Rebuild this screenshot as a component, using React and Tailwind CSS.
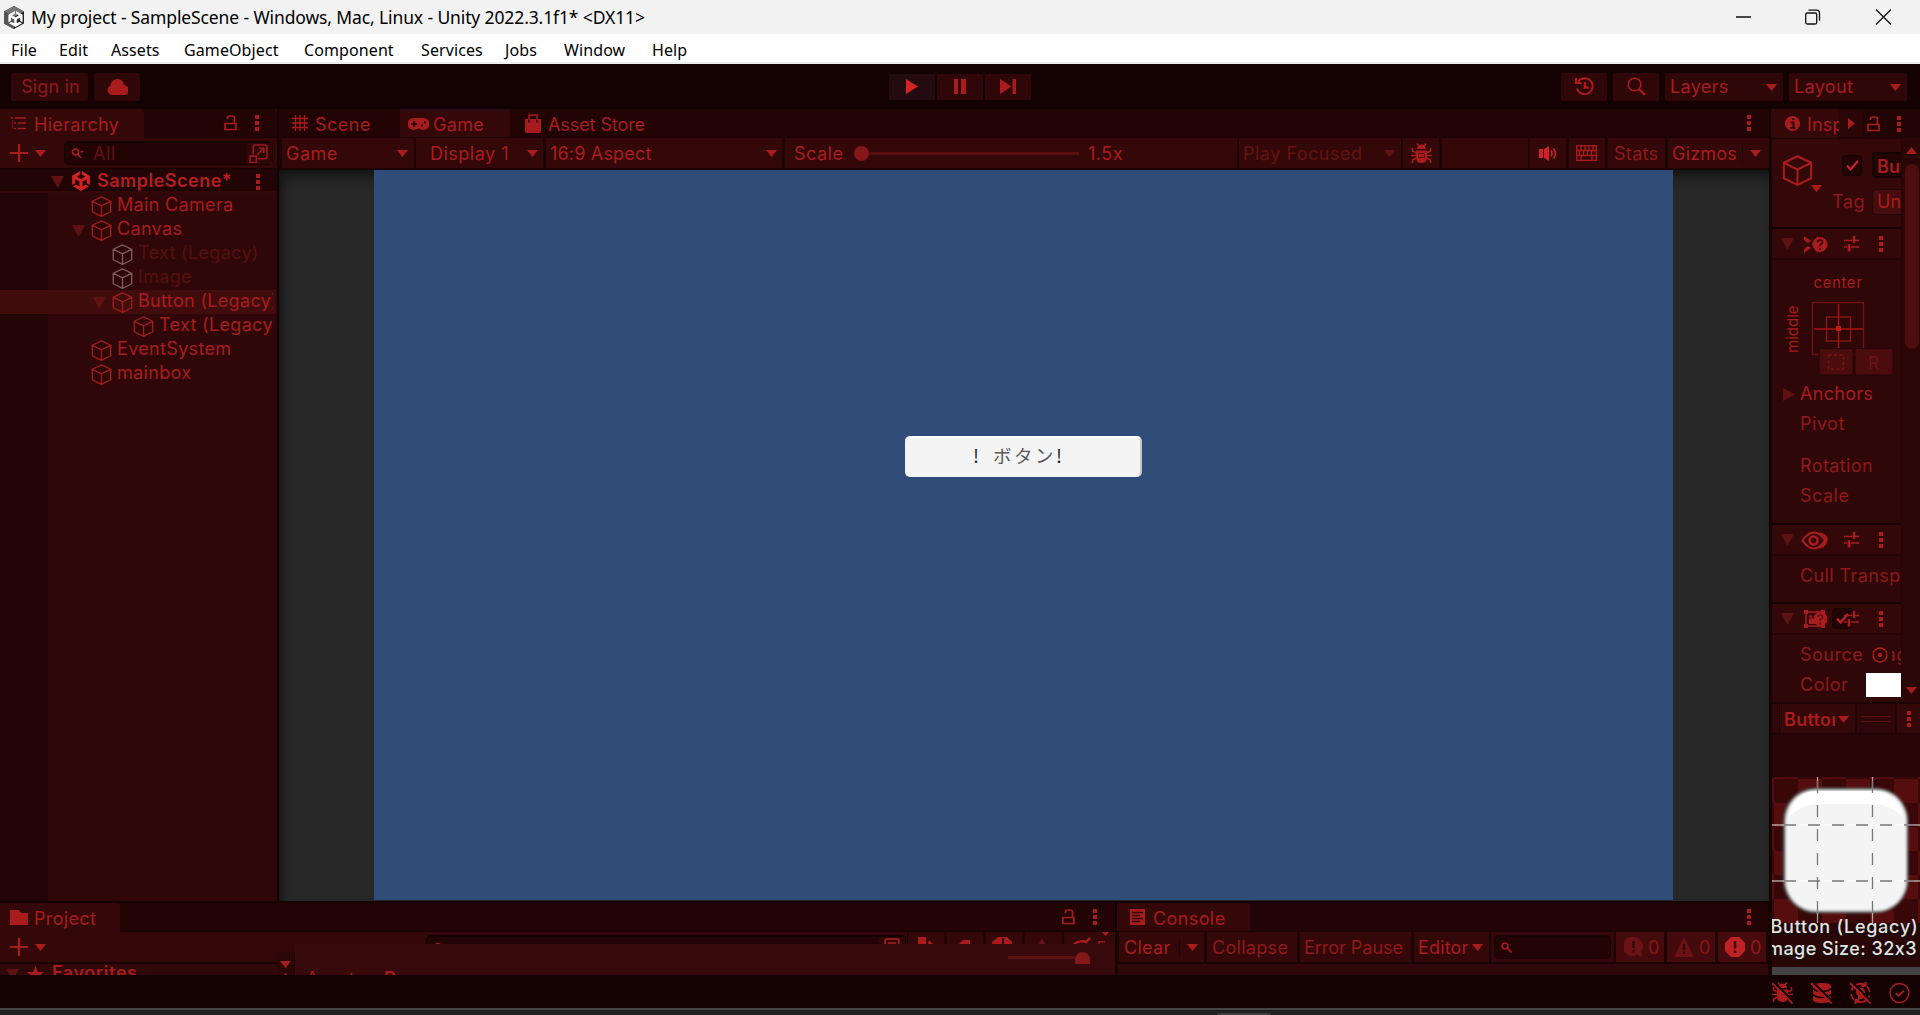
import React from 'react';
import { SiUnity } from 'react-icons/si';

const menus = [
  { label: 'File', width: 'w-[48px]' },
  { label: 'Edit', width: 'w-[52px]' },
  { label: 'Assets', width: 'w-[73px]' },
  { label: 'GameObject', width: 'w-[120px]' },
  { label: 'Component', width: 'w-[117px]' },
  { label: 'Services', width: 'w-[84px]' },
  { label: 'Jobs', width: 'w-[59px]' },
  { label: 'Window', width: 'w-[88px]' },
  { label: 'Help', width: 'w-[60px]' },
];

const tree = [
  { name: 'Main Camera', indent: 'w-[91px]' },
  { name: 'Canvas', indent: 'w-[91px]', open: true },
  { name: 'Text (Legacy)', indent: 'w-[112px]', off: true },
  { name: 'Image', indent: 'w-[112px]', off: true },
  { name: 'Button (Legacy)', indent: 'w-[112px]', open: true, selected: true },
  { name: 'Text (Legacy', indent: 'w-[133px]' },
  { name: 'EventSystem', indent: 'w-[91px]' },
  { name: 'mainbox', indent: 'w-[91px]' },
];

/* ---------- Icons ---------- */

const Down = ({ className = '' }) => (
  <svg className={`shrink-0 ${className}`} width="11" height="7" viewBox="0 0 11 7" fill="currentColor">
    <path d="M0 0h11L5.500 7z" />
  </svg>
);

const Fold = ({ className = '' }) => (
  <svg className={`shrink-0 text-[#5d1112] ${className}`} width="13" height="12" viewBox="0 0 13 12" fill="currentColor">
    <path d="M0 0h13L6.500 12z" />
  </svg>
);

const Dots = ({ className = '' }) => (
  <svg className={`shrink-0 ${className}`} width="4" height="16" viewBox="0 0 4 16" fill="currentColor">
    <path d="M0 0h4v4H0zM0 6h4v4H0zM0 12h4v4H0z" />
  </svg>
);

const Lock = ({ className = '' }) => (
  <svg className={`shrink-0 ${className}`} width="13" height="16" viewBox="0 0 13 16" fill="none" stroke="currentColor" strokeWidth="1.700">
    <path d="M1 8.500h11v6H1zM10.500 8V3Q10.500 1 8.500 1H5.500Q3.500 1 3.500 3v1" />
  </svg>
);

const Cube = ({ size = 21, className = '' }) => (
  <svg className={`shrink-0 ${className}`} width={size} height={size} viewBox="0 0 20 20" fill="none" stroke="currentColor" strokeWidth="1.300" strokeLinejoin="round">
    <path d="M10 .8l8.800 4.200v10L10 19.300 1.200 15V5zM1.200 5L10 9.500 18.800 5M10 9.500v9.800" />
  </svg>
);

const Plus = () => (
  <svg className="shrink-0" width="18" height="18" viewBox="0 0 18 18" stroke="currentColor" strokeWidth="2.200">
    <path d="M9 0v18M0 9h18" />
  </svg>
);

const Sliders = () => (
  <svg className="shrink-0" width="15" height="16" viewBox="0 0 15 16" fill="none" stroke="currentColor" strokeWidth="1.500">
    <path d="M0 4.500h8M10 4.500h5M0 11h3M7 11h8" />
    <path d="M10 0v7M5 8v7.500" strokeWidth="2.500" />
  </svg>
);

const BugShape = () => (
  <>
    <path d="M6 6a4.500 4.500 0 019 0zM5 7.500h11v7q0 5.500-5.500 5.500T5 14.500z" fill="currentColor" />
    <path d="M6 .5L8 3M15 .5L13 3M1.500 5v3l4 2M19.500 5v3l-4 2M0 12.500h21M1.500 20v-3l4-2M19.500 20v-3l-4-2" fill="none" stroke="currentColor" strokeWidth="1.600" />
  </>
);

const Slash = () => (
  <>
    <path d="M2 0l20 20" stroke="#140202" strokeWidth="2" />
    <path d="M0 1l20.500 20.500" stroke="currentColor" strokeWidth="1.800" />
  </>
);

/* ---------- Window chrome ---------- */

const TitleBar = () => (
  <div className="flex h-[34px] shrink-0 items-center bg-[#f2f2f2] pl-[4px] text-black">
    <svg width="20" height="23" viewBox="0 0 20 23">
      <path d="M10 0l10 5.500v12L10 23 0 17.500v-12z" fill="#252525" />
      <path d="M10 0l10 5.500L10 11 0 5.500z" fill="#777" />
      <path d="M0 5.500L10 11v12L0 17.500z" fill="#555" />
      <SiUnity x="3.500" y="5" width="13" height="13" color="#fff" />
    </svg>
    <p className="ml-[7px] text-[17.500px] tracking-[-0.120px]">
      My project - SampleScene - Windows, Mac, Linux - Unity 2022.3.1f1* &lt;DX11&gt;
    </p>
    <div className="mr-[29px] ml-auto flex items-center">
      <svg width="155" height="16" viewBox="0 0 155 16" fill="none" stroke="#111" strokeWidth="1.300">
        <path d="M0 8h15M140 .5l15 15M155 .5l-15 15" />
        <rect x="69.700" y="4" width="11" height="11" rx="1.500" />
        <path d="M72.500 1.200h8q3 0 3 3v7.500" />
      </svg>
    </div>
  </div>
);

const MenuBar = () => (
  <div className="flex h-[30px] shrink-0 items-center border-b-2 border-[#eeeeee] bg-white pt-[3px] pl-[11px] text-[16px] tracking-[0.100px] text-black">
    {menus.map((m) => (
      <span key={m.label} className={`shrink-0 ${m.width}`}>{m.label}</span>
    ))}
  </div>
);

const MainToolbar = () => (
  <div className="flex h-[45px] shrink-0 items-center pl-[11px]">
    <div className="flex h-[28px] w-[77px] items-center justify-center rounded-[2px] bg-[#300708] pt-px pl-[2px] tracking-[0.150px] text-[#90191a]">Sign in</div>
    <div className="ml-[6px] flex h-[28px] w-[46px] items-center justify-center rounded-[2px] bg-[#300708]">
      <svg width="21" height="16" viewBox="0 0 21 16" fill="currentColor">
        <path d="M5 16a5 5 0 01-1.500-9.500C4 2.500 7 0 10.500 0s6 2.500 6.500 6a5 5 0 01-.5 10z" />
      </svg>
    </div>
    <div className="ml-[749px] flex gap-[2px]">
      <div className="flex h-[26px] w-[46px] items-center justify-center bg-[#230b10] text-[#d22426]">
        <svg width="12" height="15" viewBox="0 0 12 15" fill="currentColor"><path d="M0 0l12 7.500L0 15z" /></svg>
      </div>
      <div className="flex h-[26px] w-[46px] items-center justify-center bg-[#300708]">
        <svg width="12" height="15" viewBox="0 0 12 15" fill="currentColor"><path d="M0 0h4v15H0zM7 0h5v15H7z" /></svg>
      </div>
      <div className="flex h-[26px] w-[46px] items-center justify-center bg-[#300708]">
        <svg width="16" height="15" viewBox="0 0 16 15" fill="currentColor"><path d="M0 0l11.500 7.500L0 15zM12.500 0H16v15h-3.500z" /></svg>
      </div>
    </div>
    <div className="mr-[13px] ml-auto flex gap-[6px]">
      <div className="flex h-[28px] w-[46px] items-center justify-center rounded-[2px] bg-[#300708]">
        <svg width="19" height="19" viewBox="0 0 19 19" fill="none" stroke="currentColor" strokeWidth="2">
          <path d="M2.800 5A8 8 0 112 11.500M1 1v5h5.500" />
          <path d="M10 5v5.500h3.500" strokeWidth="2.400" />
        </svg>
      </div>
      <div className="flex h-[28px] w-[46px] items-center justify-center rounded-[2px] bg-[#300708]">
        <svg width="19" height="19" viewBox="0 0 19 19" fill="none" stroke="currentColor" strokeWidth="1.600">
          <circle cx="7.500" cy="7.500" r="6.300" />
          <path d="M12 12l6 6" strokeWidth="2.400" />
        </svg>
      </div>
      <div className="flex h-[28px] w-[118px] items-center rounded-[2px] bg-[#300708] pt-px pr-[6px] pl-[5px] tracking-[0.350px]">
        Layers<Down className="ml-auto" />
      </div>
      <div className="flex h-[28px] w-[118px] items-center rounded-[2px] bg-[#300708] pt-px pr-[6px] pl-[5px] tracking-[0.350px]">
        Layout<Down className="ml-auto" />
      </div>
    </div>
  </div>
);

/* ---------- Hierarchy ---------- */

const Hierarchy = () => (
  <div className="flex h-[792px] w-[277px] shrink-0 flex-col overflow-hidden bg-[#2f0708]">
    <div className="flex h-[29px] shrink-0 items-center rounded-tr-[5px] border-b border-[#1a0303] bg-[#230405]">
      <div className="flex h-[29px] w-[144px] items-center rounded-tr-[4px] bg-[#340809] pl-[11px]">
        <svg width="15" height="13" viewBox="0 0 15 13" stroke="currentColor" strokeWidth="1.400">
          <path d="M0 1h2M4 1h11M3 6h2M7 6h8M3 11.500h2M7 11.500h8" />
          <path d="M1.500 3v9" strokeOpacity="0.500" />
        </svg>
        <span className="mt-[3px] ml-[8px] tracking-[0.300px]">Hierarchy</span>
      </div>
      <Lock className="ml-[80px]" />
      <Dots className="ml-[18px]" />
    </div>
    <div className="flex h-[30px] shrink-0 items-center bg-[#340809] pl-[10px]">
      <Plus />
      <Down className="ml-[7px]" />
      <div className="ml-[18px] flex h-[24px] w-[209px] items-center rounded-[5px] border border-t-2 border-[#180303] bg-[#230405] pl-[6px]">
        <svg width="13" height="11" viewBox="0 0 13 11" fill="none" stroke="currentColor" strokeWidth="1.700">
          <circle cx="4.500" cy="4" r="3" />
          <path d="M6.500 6l3.500 4" />
          <path d="M9 3h4l-2 2z" fill="currentColor" stroke="none" />
        </svg>
        <span className="ml-[9px] text-[#621213]">All</span>
        <div className="ml-auto flex h-full w-[27px] items-center justify-center border-l border-[#180303] bg-[#300708] pr-[2px]">
          <svg width="19" height="19" viewBox="0 0 18 18" fill="none" stroke="#981a1b" strokeWidth="1.500">
            <path d="M4 10V3q0-2 2-2h9q2 0 2 2v9q0 2-2 2H8" />
            <path d="M1 11.500h6v6H1zM8 10l6-6M9.500 4H14v4.500" />
          </svg>
        </div>
      </div>
    </div>
    <div className="flex h-[25px] shrink-0 items-center border-t border-b-2 border-t-[#1a0303] border-b-[#340809] bg-[#210405] pl-[51px]">
      <Fold className="mt-[3px]" />
      <SiUnity size={20} className="mt-[2px] ml-[7px] shrink-0 text-[#d02325]" />
      <span className="mt-[2px] ml-[6px] w-[152px] font-semibold text-[#b61e20]">SampleScene*</span>
      <Dots className="mt-[3px] ml-[7px]" />
    </div>
    <div className="flex flex-1 flex-col bg-linear-to-r from-[#230506] from-[48px] to-[#2f0708] to-[48px] pt-px">
      {tree.map((node, i) => (
        <div key={i} className={`flex h-[24px] w-[276px] items-center overflow-hidden pr-[3px] pb-[3px] whitespace-nowrap ${node.selected ? 'bg-[#410c0d]' : ''}`}>
          <div className={`flex shrink-0 justify-end pr-[6px] ${node.indent}`}>{node.open && <Fold className="mt-[4px]" />}</div>
          <Cube className={node.off ? 'mt-[3px] text-[#7d5c5d]' : 'mt-[3px] text-[#a01b1c]'} />
          <span className={`ml-[5px] overflow-hidden tracking-[0.330px] ${node.off ? 'text-[#561011]' : ''}`}>{node.name}</span>
        </div>
      ))}
    </div>
  </div>
);

/* ---------- Game view ---------- */

const GamePanel = () => (
  <div className="ml-[2px] flex h-[792px] w-[1490px] shrink-0 flex-col bg-[#1c0304]">
    <div className="flex h-[28px] shrink-0 items-center rounded-t-[4px] bg-[#230405] pl-[13px]">
      <svg width="16" height="16" viewBox="0 0 16 16" stroke="currentColor">
        <path d="M3.500 0v16M8 0v16M12.500 0v16M0 3.500h16M0 8h16M0 12.500h16" strokeWidth="1.300" />
      </svg>
      <span className="mt-[3px] ml-[7px] w-[85px]">Scene</span>
      <div className="flex h-[28px] w-[110px] items-center border-t-2 border-[#280b12] bg-[#340809] pl-[8px]">
        <svg width="21" height="12" viewBox="0 0 21 12" fill="currentColor">
          <path fillRule="evenodd" d="M5.500 0h10a5.500 5.500 0 010 12C13 12 13 10.500 10.500 10.500S8 12 5.500 12a5.500 5.500 0 010-12zM5 3v2H3v2h2v2h2V7h2V5H7V3zM13 6.500v2h2v-2zM16 3.500v2h2v-2z" />
        </svg>
        <span className="mt-[2px] ml-[4px] tracking-[0.300px]">Game</span>
      </div>
      <svg className="ml-[15px]" width="16" height="19" viewBox="0 0 16 19">
        <path d="M0 5h16v12q0 2-2 2H2q-2 0-2-2z" fill="currentColor" />
        <path d="M4 8V1h8v7" fill="none" stroke="currentColor" strokeWidth="1.500" />
        <path d="M4 5.500v3M12 5.500v3" stroke="#230405" strokeWidth="1.300" />
      </svg>
      <span className="mt-[3px] ml-[7px] tracking-[-0.080px]">Asset Store</span>
      <Dots className="mr-[18px] ml-auto" />
    </div>
    <div className="mt-px flex h-[30px] w-[1490px] shrink-0 pl-[3px]">
      <div className="flex w-[132px] items-center bg-[#340809] pt-px pr-[6px] pl-[4px]">Game<Down className="ml-auto" /></div>
      <div className="ml-[2px] flex w-[127px] items-center bg-[#340809] pt-px pr-[5px] pl-[14px]">Display 1<Down className="ml-auto" /></div>
      <div className="ml-[3px] flex w-[236px] items-center bg-[#340809] pt-px pr-[5px] pl-[4px] tracking-[0.180px]">16:9 Aspect<Down className="ml-auto" /></div>
      <div className="ml-[3px] flex w-[452px] items-center bg-[#340809] pt-px pl-[9px]">
        <span className="w-[60px] shrink-0">Scale</span>
        <div className="h-[15px] w-[15px] shrink-0 rounded-full bg-[#851718]" />
        <div className="h-[3px] w-[210px] shrink-0 bg-[#570f10]" />
        <span className="ml-[9px]">1.5x</span>
      </div>
      <div className="ml-[2px] flex w-[162px] items-center bg-[#340809] pt-px pr-[6px] pl-[4px] text-[#651213]">Play Focused<Down className="ml-auto" /></div>
      <div className="ml-[2px] flex w-[36px] items-center justify-center bg-[#340809]">
        <svg width="21" height="21" viewBox="0 0 21 21">
          <BugShape />
          <path d="M7.500 10.500h6v4h-6z" fill="none" stroke="#5d1011" />
        </svg>
      </div>
      <div className="ml-[3px] w-[86px] bg-[#340809]" />
      <div className="ml-[2px] flex w-[36px] items-center justify-center bg-[#340809] text-[#d02325]">
        <svg width="19" height="15" viewBox="0 0 19 15" fill="currentColor">
          <path d="M0 3h4v9H0zM5 3l5-3v15l-5-3z" />
          <path d="M12 4.500q2 3 0 6M14.500 2.500q4 5 0 10" fill="none" stroke="currentColor" strokeWidth="1.500" />
        </svg>
      </div>
      <div className="ml-[3px] flex w-[36px] items-center justify-center bg-[#340809] pr-px">
        <svg width="21" height="16" viewBox="0 0 21 16" fill="none" stroke="currentColor" strokeWidth="1.300">
          <path d="M.7.7h19.600v14.600H.7zM1 5.500h19M1 10.500h19M5 1v4M9 1v4M13 1v4M17 1v4M3.500 6v4M7.500 6v4M11.500 6v4M15.500 6v4M5 11v4M16 11v4" />
        </svg>
      </div>
      <div className="ml-[3px] flex w-[57px] items-center bg-[#340809] pt-px pl-[6px] tracking-[0.300px] text-[#90191a]">Stats</div>
      <div className="ml-[3px] flex w-[101px] items-center bg-[#340809] pt-px pl-[4px]">
        <span className="w-[70px] tracking-[0.200px]">Gizmos</span>
        <div className="h-[18px] w-px bg-[#210405]" />
        <Down className="ml-[7px]" />
      </div>
    </div>
    <div className="mt-[2px] flex h-[731px] bg-[#282828] pl-[95px] shadow-[inset_0_14px_14px_-8px_#121212,inset_8px_0_8px_-5px_#161616]">
      <div className="flex h-[730px] w-[1299px] justify-center bg-[#304d79] pt-[266px]">
        <div className="flex h-[41px] w-[237px] items-center rounded-[5px] border-t-2 border-r-2 border-t-white border-r-[#c4c4c4] bg-[#f4f4f4] pb-[5px] pl-[68px] font-['Noto_Sans_CJK_JP',sans-serif] text-[18.500px] tracking-normal whitespace-pre text-[#5a5a5a]">
          <span className="w-[15px] text-[#222]">!</span>
          <span className="w-[68px] text-right tracking-[2.500px]">ボタン</span>
          <span className="text-[#222]">!</span>
        </div>
      </div>
    </div>
  </div>
);

/* ---------- Inspector ---------- */

const ComponentHeader = ({ children }) => (
  <div className="flex h-[33px] shrink-0 items-center border-t-2 border-b-2 border-t-[#160202] border-b-[#270506] bg-[#340809] pt-px pl-[9px]">
    <Fold />
    <div className="ml-[9px] flex w-[41px] shrink-0 items-center">{children}</div>
    <Sliders />
    <Dots className="ml-[20px]" />
  </div>
);

const Inspector = () => (
  <div className="ml-[2px] flex h-[866px] w-[149px] shrink-0 flex-col overflow-hidden bg-[#1c0304]">
    <div className="flex h-[29px] shrink-0 items-center rounded-t-[4px] bg-[#230405]">
      <div className="flex h-[29px] w-[68px] items-center overflow-hidden bg-[#340809] pl-[14px]">
        <svg className="shrink-0" width="15" height="15" viewBox="0 0 15 15">
          <circle cx="7.500" cy="7.500" r="7.500" fill="currentColor" />
          <path d="M5.500 6.500h3v5M5 12h5.500M7 3h2.200" fill="none" stroke="#340809" strokeWidth="2" />
        </svg>
        <span className="mt-[2px] ml-[7px] tracking-[0.200px]">Inspector</span>
      </div>
      <div className="flex h-[27px] w-[24px] items-center bg-[#2b0607] pl-[9px]">
        <svg width="7" height="11" viewBox="0 0 7 11" fill="currentColor"><path d="M0 0l7 5.500L0 11z" /></svg>
      </div>
      <Lock className="ml-[4px]" />
      <Dots className="ml-[17px]" />
    </div>
    <div className="ml-px flex h-[564px] shrink-0 bg-[#2f0708]">
      <div className="flex h-[564px] w-[129px] flex-col overflow-hidden whitespace-nowrap">
        <div className="flex h-[89px] shrink-0 border-t border-[#210405] bg-[#340809] pl-[10px]">
          <div className="flex w-[40px] shrink-0 flex-col">
            <Cube size={31} className="mt-[16px]" />
            <Down className="mt-[-1px] ml-[29px]" />
          </div>
          <div className="flex flex-col">
            <div className="mt-[13px] flex items-center">
              <div className="ml-[20px] flex h-[21px] w-[20px] items-center justify-center rounded-[3px] border border-[#180303] bg-[#210405]">
                <svg width="13" height="11" viewBox="0 0 13 11" fill="none" stroke="#d02325" strokeWidth="2"><path d="M1 5.500l3.500 4L12 1" /></svg>
              </div>
              <div className="ml-[10px] flex h-[26px] w-[60px] items-center rounded-[4px] border-2 border-[#180303] bg-[#230405] pt-[3px] pl-[3px] font-semibold tracking-[0.200px]">Button</div>
            </div>
            <div className="mt-[11px] flex items-center">
              <span className="ml-[10px] w-[40px] text-[#90191a]">Tag</span>
              <div className="flex h-[26px] w-[80px] items-center rounded-[4px] border border-[#210405] bg-[#470c0d] pl-[4px] tracking-[0.200px]">Untagged</div>
            </div>
          </div>
        </div>
        <ComponentHeader>
          <svg width="25" height="19" viewBox="0 0 25 19" fill="currentColor">
            <path d="M1 1l7 5-3 2-4-3zM1 18l7-5-3-2-4 3zM9 9l6-8v17z" />
            <circle cx="17" cy="9.500" r="7.500" />
            <path d="M14.500 7.500q0-2.500 2.500-2.500t2.500 2.200q0 1.300-2.500 2.800v1.500M17 13v2" fill="none" stroke="#340809" strokeWidth="1.600" />
          </svg>
        </ComponentHeader>
        <div className="flex h-[119px] shrink-0 flex-col">
          <p className="mt-[12px] w-[132px] text-center text-[15px] leading-[22px] tracking-[0.600px]">center</p>
          <svg className="mt-[6px] shrink-0" width="129" height="79" viewBox="1772 300 129 79">
            <text transform="translate(1798 353) rotate(-90)" className="text-[15px] tracking-[0px]" fill="currentColor">middle</text>
            <g fill="none" stroke="#6c1314" strokeWidth="1.400">
              <rect x="1812.500" y="302.500" width="51" height="52" />
              <rect x="1826.500" y="317" width="24" height="24" stroke="#851718" />
            </g>
            <path d="M1838.500 304v45M1814 329h49" stroke="#a81312" strokeWidth="1.500" />
            <rect x="1836" y="326" width="5" height="5" fill="#c02004" />
            <rect x="1819" y="348.500" width="34" height="26.500" rx="2" fill="#4a0c0d" stroke="#250506" />
            <rect x="1855" y="348.500" width="38" height="26.500" rx="2" fill="#4a0c0d" stroke="#250506" />
            <rect x="1828.500" y="355" width="15" height="14" fill="none" stroke="#7a1516" strokeWidth="1.500" strokeDasharray="3 2.500" />
            <text x="1868" y="368.500" className="text-[17px]" fill="#6c1314">R</text>
          </svg>
        </div>
        <div className="flex h-[30px] shrink-0 items-center pl-[11px]">
          <svg width="12" height="13" viewBox="0 0 12 13" fill="#5d1112"><path d="M0 0l12 6.500L0 13z" /></svg>
          <span className="ml-[5px] tracking-[0.300px]">Anchors</span>
        </div>
        <p className="h-[30px] shrink-0 pl-[28px] leading-[30px] text-[#90191a]">Pivot</p>
        <p className="mt-[12px] h-[30px] shrink-0 pl-[28px] leading-[30px] tracking-[0.400px] text-[#90191a]">Rotation</p>
        <p className="mb-[12px] h-[30px] shrink-0 pl-[28px] leading-[30px] text-[#90191a]">Scale</p>
        <ComponentHeader>
          <svg className="-ml-[2px]" width="28" height="19" viewBox="0 0 28 19" fill="none" stroke="currentColor">
            <path d="M1.500 9.500Q7 1.500 13 1.500t11 8q-5 8-11 8t-11.500-8z" strokeWidth="2.200" />
            <circle cx="12.500" cy="9.500" r="4" strokeWidth="2.500" />
            <path d="M18 2q9 1 8 7.500T18 17q5-3 6-7.500T18 2z" fill="currentColor" />
          </svg>
        </ComponentHeader>
        <p className="mt-[4px] mb-[10px] h-[32px] shrink-0 pl-[28px] leading-[32px] tracking-[0.400px] text-[#90191a]">Cull Transparent</p>
        <div className="flex h-[33px] shrink-0 items-center border-t-2 border-b-2 border-t-[#160202] border-b-[#270506] bg-[#340809] pl-[9px]">
          <Fold />
          <svg className="ml-[9px] shrink-0" width="26" height="18" viewBox="0 0 26 18" fill="none" stroke="currentColor" strokeWidth="1.500">
            <path d="M3 2h17v14H3z" />
            <path d="M1 0h4v4H1zM18 0h4v4h-4zM1 14h4v4H1zM18 14h4v4h-4zM6 14V9l4-1 3 4V8l4-3v9z" fill="currentColor" stroke="none" />
            <circle cx="7.500" cy="6.500" r="1.500" fill="currentColor" stroke="none" />
            <circle cx="17.500" cy="9" r="7" fill="currentColor" stroke="none" />
            <path d="M15 7q0-2 2.300-2t2.300 2q0 1.200-2.300 2.500V11M17.300 12.500v2" stroke="#5d1011" />
          </svg>
          <div className="ml-[3px] flex h-[21px] w-[21px] shrink-0 items-center justify-center rounded-[3px] border border-[#180303] bg-[#210405]">
            <svg width="13" height="11" viewBox="0 0 13 11" fill="none" stroke="#d02325" strokeWidth="2"><path d="M1 5.500l3.500 4L12 1" /></svg>
          </div>
          <div className="-ml-[9px] flex"><Sliders /></div>
          <Dots className="ml-[20px]" />
        </div>
        <div className="mt-[5px] flex h-[30px] shrink-0 items-center pl-[28px] text-[#90191a]">
          <span className="w-[72px] shrink-0">Source</span>
          <svg className="shrink-0" width="16" height="16" viewBox="0 0 16 16" stroke="#a91c1d" fill="none" strokeWidth="1.500">
            <circle cx="8" cy="8" r="7" />
            <circle cx="8" cy="8" r="1.500" fill="#a91c1d" />
          </svg>
          <span className="ml-[4px] flex w-[9px] justify-end overflow-hidden"><span className="-mr-[7px]">ag</span></span>
        </div>
        <div className="flex h-[30px] shrink-0 items-center pl-[28px] text-[#90191a]">
          <span className="w-[66px] shrink-0">Color</span>
          <div className="h-[24px] w-[35px] shrink-0 bg-white" />
        </div>
      </div>
      <div className="flex w-[19px] flex-col items-center border-l border-[#260506] bg-[#2b0607] pl-px">
        <Down className="mt-[9px] shrink-0 rotate-180" />
        <div className="mt-[10px] h-[185px] w-[14px] shrink-0 rounded-full bg-[#4d0d0e]" />
        <Down className="mt-auto mb-[8px]" />
      </div>
    </div>
    <div className="mt-[2px] ml-px flex h-[29px] shrink-0">
      <div className="w-[7px] bg-[#2f0708]" />
      <div className="ml-px flex w-[75px] items-center overflow-hidden bg-[#340809] pt-[2px] pl-[4px] font-semibold tracking-[0.300px]">
        <span className="w-[51px] overflow-hidden">Button</span>
        <Down className="ml-[3px]" />
      </div>
      <div className="ml-[2px] flex w-[38px] flex-col items-center justify-center gap-[4px] bg-[#2f0708]">
        <div className="h-px w-[30px] bg-[#5d1011]" />
        <div className="h-px w-[30px] bg-[#5d1011]" />
      </div>
      <div className="ml-[2px] flex w-[23px] items-center bg-[#340809] pl-[10px]"><Dots /></div>
    </div>
    <div className="mt-[1px] ml-px h-[233px] shrink-0 bg-[#290606]">
      <svg width="148" height="233" viewBox="1772 734 148 233">
        <defs>
          <pattern id="checks" x="1774" y="779" width="48" height="48" patternUnits="userSpaceOnUse">
            <rect width="48" height="48" fill="#550d0e" />
            <path d="M0 0h24v24H0zM24 24h24v24H24z" fill="#380809" />
          </pattern>
          <filter id="soft" x="-10%" y="-10%" width="120%" height="120%"><feGaussianBlur stdDeviation="1.800" /></filter>
        </defs>
        <rect x="1772" y="777" width="148" height="146" fill="url(#checks)" />
        <rect x="1783" y="788" width="125" height="125" rx="33" fill="#404545" filter="url(#soft)" />
        <rect x="1785" y="789.500" width="122" height="122" rx="31" fill="#f4f4f4" filter="url(#soft)" />
        <path d="M1789 818Q1793 791 1818 791h55Q1899 792 1903 818 1891 804 1873 804h-55q-18 0-29 14z" fill="#fff" />
        <path d="M1817.500 777v146M1872.500 777v146M1772 825h148M1772 881h148" stroke="#ffffff" strokeOpacity="0.600" strokeWidth="1.300" />
        <path d="M1817.500 781v140M1872.500 781v140" stroke="#777" strokeWidth="1.300" strokeDasharray="12 12" />
        <path d="M1784 825h130M1784 881h130" stroke="#777" strokeWidth="1.600" strokeDasharray="12 12" />
        <g fill="#111" transform="translate(1.500 2)" className="text-[18px] font-medium tracking-[0.750px]">
          <text x="1770.500" y="933">Button (Legacy)</text>
          <text x="1767" y="955" className="tracking-[0.450px]">mage Size: 32x3</text>
        </g>
        <g fill="#e2e2e2" className="text-[18px] font-medium tracking-[0.750px]">
          <text x="1770.500" y="933">Button (Legacy)</text>
          <text x="1767" y="955" className="tracking-[0.450px]">mage Size: 32x3</text>
        </g>
      </svg>
    </div>
    <div className="ml-px h-[8px] shrink-0 bg-[#444444]" />
  </div>
);

/* ---------- Bottom panels ---------- */

const Project = () => (
  <div className="flex h-[72px] w-[1115px] shrink-0 flex-col overflow-hidden bg-[#340809]">
    <div className="flex h-[29px] shrink-0 items-center rounded-tr-[4px] border-b border-[#1a0303] bg-[#230405]">
      <div className="flex h-[29px] w-[120px] items-center rounded-tr-[4px] bg-[#340809] pl-[10px]">
        <svg width="18" height="15" viewBox="0 0 18 15" fill="currentColor"><path d="M0 0h8.500l3 3H18v12H0z" /></svg>
        <span className="mt-[3px] ml-[6px] tracking-[0.350px]">Project</span>
      </div>
      <Lock className="mr-[18px] ml-auto" />
      <Dots className="mr-[18px]" />
    </div>
    <div className="flex h-[43px]">
      <div className="flex w-[277px] shrink-0 flex-col">
        <div className="flex h-[30px] shrink-0 items-center pl-[10px]"><Plus /><Down className="ml-[7px]" /></div>
        <div className="flex h-[13px] items-start overflow-hidden border-t-2 border-[#1a0303] bg-[#300809] pl-[6px]">
          <Fold className="mt-[5px]" />
          <svg className="mt-[2px] ml-[8px] shrink-0" width="17" height="17" viewBox="0 0 17 17" fill="currentColor"><path d="M8.500 0l2.300 6H17l-5 4 2 7-5.500-4L3 17l2-7-5-4h6.200z" /></svg>
          <span className="ml-[8px] leading-[18px] font-semibold tracking-[0.600px]">Favorites</span>
        </div>
      </div>
      <div className="flex w-[18px] shrink-0 flex-col items-center pt-[20px]">
        <div className="flex h-[23px] w-full flex-col items-center border-r border-[#1f0404] bg-[#2a0607] pt-[9px]">
          <Down />
          <Down className="mt-[4px] scale-75 rotate-180" />
        </div>
      </div>
      <div className="flex flex-1 flex-col">
        <div className="flex h-[12px] shrink-0 overflow-hidden pl-[131px]">
          <div className="mt-[3px] flex h-[24px] w-[480px] shrink-0 rounded-[5px] border border-t-2 border-[#140202] bg-[#230405] pl-[7px]">
            <div className="mt-[6px] h-[10px] w-[8px] rounded-full border-2 border-[#a91c1d]" />
            <div className="ml-auto flex w-[27px] justify-center bg-[#300708] pt-px">
              <div className="h-[14px] w-[16px] rounded-[3px] border-2 border-[#90191a] p-[2px]"><div className="h-[6px] border-2 border-[#90191a]" /></div>
            </div>
          </div>
          <svg className="ml-[1px] shrink-0" width="208" height="12" viewBox="907 932 208 12">
            <path d="M907 932v12M945.500 932v12M984.500 932v12M1023.500 932v12M1063 932v12" stroke="#1f0404" strokeWidth="2.500" />
            <path d="M918 937h8v7h-8zM929 940l4 4h-5zM963 940h7v4h-11zM998 937h9l5 5v2h-20v-2z" fill="#a91c1d" />
            <path d="M1003 938v6" stroke="#340809" strokeWidth="2" />
            <path d="M1042 938l3 6h-6z" fill="#6b1314" />
            <path d="M1074 944q6-4 12-2l4-4" fill="none" stroke="#a91c1d" strokeWidth="2.500" />
            <path d="M1102 932h7l-3.500 4z" fill="#a91c1d" />
            <text x="1096" y="954" fontSize="17" fill="#90191a">5</text>
          </svg>
        </div>
        <div className="flex h-[31px] flex-col bg-[#380a0b]">
          <div className="flex h-[27px] shrink-0 items-center justify-end pr-[25px]">
            <div className="h-[3px] w-[67px] bg-[#5d1011]" />
            <div className="mt-px h-[12px] w-[15px] rounded-t-full rounded-b-[5px] bg-[#851718]" />
          </div>
          <div className="h-[4px] overflow-hidden pl-[11px]">
            <span className="block leading-[16px] tracking-[0.200px]">Assets ▸ <b className="font-semibold">P</b></span>
          </div>
        </div>
      </div>
    </div>
  </div>
);

const Console = () => (
  <div className="ml-[2px] flex h-[72px] w-[651px] shrink-0 flex-col overflow-hidden bg-[#1c0304]">
    <div className="flex h-[28px] shrink-0 items-center rounded-t-[4px] bg-[#230405]">
      <div className="flex h-[28px] w-[133px] items-center rounded-t-[4px] bg-[#340809] pl-[13px]">
        <svg width="15" height="16" viewBox="0 0 15 16">
          <path d="M0 0h15v16H0z" fill="currentColor" />
          <path d="M2 3.500h11M2 6.500h8M2 9.500h11M2 12.500h8" stroke="#340809" strokeWidth="1.300" />
        </svg>
        <span className="mt-[3px] ml-[8px] tracking-[0.400px]">Console</span>
      </div>
      <Dots className="mr-[17px] ml-auto" />
    </div>
    <div className="mt-px flex h-[30px] shrink-0 pl-[2px]">
      <div className="flex w-[85px] items-center bg-[#340809] pt-px pl-[5px]">
        <span className="w-[55px] tracking-[0.300px]">Clear</span>
        <div className="h-[18px] w-px bg-[#210405]" />
        <Down className="ml-[7px]" />
      </div>
      <div className="ml-[3px] flex w-[90px] items-center bg-[#340809] pt-px pl-[5px] tracking-[0.300px] text-[#90191a]">Collapse</div>
      <div className="ml-[3px] flex w-[111px] items-center bg-[#340809] pt-px pl-[4px] tracking-[-0.020px] whitespace-nowrap text-[#90191a]">Error Pause</div>
      <div className="ml-[3px] flex w-[75px] items-center bg-[#340809] pt-px pr-[6px] pl-[4px] tracking-[0.150px]">Editor<Down className="ml-auto" /></div>
      <div className="ml-[2px] flex w-[123px] items-center bg-[#340809] pl-[3px]">
        <div className="flex h-[24px] w-[117px] items-center rounded-[5px] border border-t-2 border-[#180303] bg-[#230405] pl-[6px]">
          <svg width="11" height="11" viewBox="0 0 11 11" fill="none" stroke="currentColor" strokeWidth="1.700"><circle cx="4" cy="4" r="3" /><path d="M6 6l4.500 4.500" /></svg>
        </div>
      </div>
      <div className="ml-[2px] flex w-[48px] items-center bg-[#450b0c] pl-[8px] text-[#851718]">
        <svg className="shrink-0" width="19" height="20" viewBox="0 0 19 20"><path d="M9.500 0a9.500 9.500 0 018 14.500V20l-4-2.500A9.500 9.500 0 119.500 0z" fill="#6b1314" /><path d="M9.500 4v7M9.500 13v2.500" stroke="#340809" strokeWidth="2.500" /></svg>
        <span className="mt-[2px] ml-[5px] tracking-normal">0</span>
      </div>
      <div className="ml-[3px] flex w-[48px] items-center bg-[#450b0c] pl-[7px] text-[#851718]">
        <svg className="shrink-0" width="20" height="20" viewBox="0 0 20 20"><path d="M10 0l10 20H0z" fill="#6b1314" /><path d="M10 7v6M10 14.500V17" stroke="#340809" strokeWidth="2.500" /></svg>
        <span className="mt-[2px] ml-[5px] tracking-normal">0</span>
      </div>
      <div className="ml-[3px] flex w-[48px] items-center bg-[#450b0c] pl-[7px] text-[#90191a]">
        <svg className="shrink-0" width="20" height="20" viewBox="0 0 20 20"><path d="M6 0h8l6 6v8l-6 6H6l-6-6V6z" fill="#c02123" /><path d="M10 4v7.500M10 13.500V16" stroke="#340809" strokeWidth="2.500" /></svg>
        <span className="mt-[2px] ml-[5px] tracking-normal">0</span>
      </div>
    </div>
    <div className="mt-[2px] ml-px h-[11px] bg-[#300809]" />
  </div>
);

const StatusBar = () => (
  <div className="flex h-[33px] shrink-0 items-center justify-end bg-[#140202] pt-[3px] pr-[10px]">
    <div className="flex items-center gap-[18px]">
      <svg width="21" height="22" viewBox="0 0 21 22">
        <BugShape />
        <Slash />
      </svg>
      <svg width="21" height="22" viewBox="0 0 21 22">
        <path d="M2 4q0-3 9-3t9 3v14q0 3-9 3t-9-3z" fill="currentColor" />
        <path d="M2 6.500q3 3 9 3t9-3M2 12.500q3 3 9 3t9-3" fill="none" stroke="#140202" strokeWidth="1.600" />
        <Slash />
      </svg>
      <svg width="21" height="22" viewBox="0 0 21 22" fill="none" stroke="currentColor" strokeWidth="2">
        <path d="M1.500 8.500A9.500 9.500 0 0115 3M19.500 13.500A9.500 9.500 0 016 19M15.500 0v4h-4M5.500 22v-4h4" />
        <path d="M1 12q1 4 3 5.500M20 10q-1-4-3-5.500" strokeWidth="1.600" />
        <path d="M10.500 5.500a4.500 4.500 0 012.500 8.200V17H8v-3.300a4.500 4.500 0 012.500-8.200z" fill="currentColor" stroke="none" />
        <Slash />
      </svg>
      <svg width="21" height="22" viewBox="0 0 22 22" fill="none" stroke="currentColor" strokeWidth="1.500">
        <circle cx="11" cy="11" r="10" />
        <path d="M7 11l3 3 5.500-5.500" strokeWidth="2" />
      </svg>
    </div>
  </div>
);

export default function App() {
  return (
    <div className="flex h-[1015px] w-[1920px] flex-col overflow-hidden bg-[#140202] font-['Noto_Sans','Liberation_Sans',sans-serif]">
      <TitleBar />
      <MenuBar />
      <div className="flex flex-1 flex-col font-['Inter',sans-serif] text-[18px] leading-[24px] tracking-[0.500px] text-[#a91c1d]">
        <MainToolbar />
        <div className="flex h-[866px] shrink-0">
          <div className="flex w-[1769px] shrink-0 flex-col">
            <div className="flex h-[794px] shrink-0"><Hierarchy /><GamePanel /></div>
            <div className="flex h-[72px] shrink-0"><Project /><Console /></div>
          </div>
          <Inspector />
        </div>
        <StatusBar />
        <div className="flex h-[7px] shrink-0 items-end border-t-2 border-[#464446] bg-[#222122] pl-[1217px]">
          <div className="h-[2px] w-[54px] rounded-t-[3px] bg-[#3d3c3d]" />
        </div>
      </div>
    </div>
  );
}
